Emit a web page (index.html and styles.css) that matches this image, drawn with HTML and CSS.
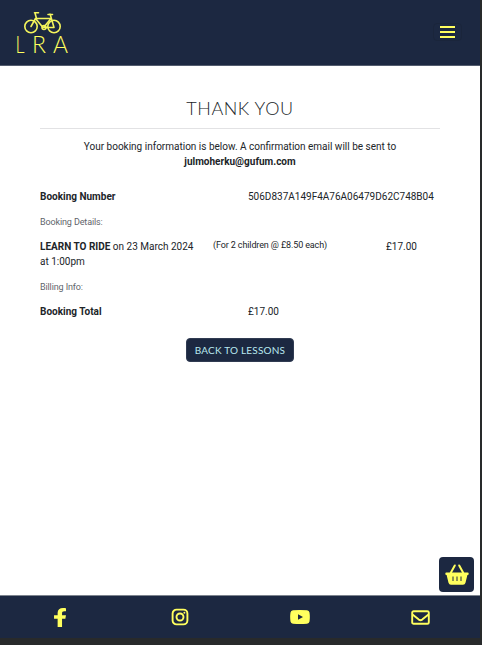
FILE: index.html
```html
<!DOCTYPE html>
<html lang="en">
<head>
<meta charset="utf-8">
<title>Thank You</title>
<link rel="stylesheet" href="styles.css">
</head>
<body>
<div class="page">
  <header class="header">
    <svg class="logo" width="60" height="50" viewBox="0 0 60 50" role="img" aria-label="LRA">
      <g fill="none" stroke="#f4f55c" stroke-width="1.600" stroke-linecap="round" stroke-linejoin="round">
        <circle cx="17" cy="18.500" r="6.200"/><circle cx="40" cy="18.500" r="6.200"/>
        <path d="M17 18.500l4.500-8L29 19.500h11L36.500 7.500M21.500 10.500L37 10.500M29.500 19.500l7.500-9M22.500 10.500L21 5M20.500 4.800h4M34 6.500h4.500M36.500 7.500l-.5-1.500"/>
        <circle cx="30" cy="19.500" r="2"/>
      </g>
      <g class="logo-text">
        <text x="1.500" y="44.500" textLength="9" lengthAdjust="spacingAndGlyphs">L</text>
        <text x="18" y="44.500" textLength="14" lengthAdjust="spacingAndGlyphs">R</text>
        <text x="39" y="44.500" textLength="15" lengthAdjust="spacingAndGlyphs">A</text>
      </g>
    </svg>
    <div class="menu"><span></span><span></span><span></span></div>
  </header>
  <main class="main">
    <h1 class="title">THANK YOU</h1>
    <p class="intro">Your booking information is below. A confirmation email will be sent to<br><b>julmoherku@gufum.com</b></p>
    <div class="row half"><b>Booking Number</b><span>506D837A149F4A76A06479D62C748B04</span></div>
    <div class="label">Booking Details:</div>
    <div class="row lesson">
      <span><b>LEARN TO RIDE</b> on 23 March 2024<br>at 1:00pm</span>
      <span class="small">(For 2 children @ £8.50 each)</span>
      <span>£17.00</span>
    </div>
    <div class="label">Billing Info:</div>
    <div class="row half"><b>Booking Total</b><span>£17.00</span></div>
    <a class="back">BACK TO LESSONS</a>
  </main>
  <footer class="footer">
    <div><svg width="12" height="19" viewBox="22 0 272 512" preserveAspectRatio="none"><path d="M279.140 288l14.220-92.660h-88.910v-60.130c0-25.350 12.420-50.060 52.240-50.060h40.420V6.260S260.430 0 225.360 0c-73.220 0-121.080 44.380-121.080 124.720v70.620H22.890V288h81.390v224h100.170V288z"/></svg></div>
    <div><svg width="18" height="18" viewBox="0 0 18 18"><rect class="line" x="1.600" y="1.600" width="14.800" height="14.800" rx="4"/><circle class="line" cx="9" cy="9" r="3.500"/><circle cx="13.400" cy="4.700" r="1"/></svg></div>
    <div><svg width="20" height="14" viewBox="0 0 20 14"><path fill-rule="evenodd" d="M3 .3Q10-.3 17 .3q2.200.3 2.500 2.300.7 4.400 0 8.800-.3 2-2.500 2.300Q10 14.300 3 13.700.8 13.400.5 11.400q-.7-4.400 0-8.800Q.8.600 3 .3zM8 4.200v5.600L13 7z"/></svg></div>
    <div><svg width="19" height="15" viewBox="0 0 19 15"><rect class="line" x="1.200" y="1.200" width="16.600" height="12.600" rx="1.400"/><path class="line" d="M1.500 4.500l6.300 5.100q1.700 1.200 3.400 0l6.300-5.100"/></svg></div>
  </footer>
  <a class="basket"><svg width="24" height="22" viewBox="0 0 24 22"><path d="M1.300 8.500h21.400q1 0 1 1.200t-1 1.200h-.3l-1.900 7.900q-.5 2-2.500 2H6q-2 0-2.500-2l-1.900-7.900h-.3q-1 0-1-1.200t1-1.200z"/><path class="handle" d="M5.800 8.800l4-7.300M18.200 8.800l-4-7.300"/><path class="slots" d="M8 12.500v4.500M12 12.500v4.500M16 12.500v4.500"/></svg></a>
</div>
</body>
</html>
```
FILE: styles.css
```css
* { box-sizing: border-box; }
body { margin: 0; background: #282a2b; overflow: hidden; }
.page {
  width: 480px; height: 638px; background: #fff; position: relative;
  display: flex; flex-direction: column;
  font: 10px/15px Roboto, sans-serif; color: #212529;
}
.header {
  height: 66px; flex: none; background: #1c2841; border-bottom: 1px solid #535c6e;
  display: flex; justify-content: space-between; padding: 8px 18px 0 14px;
}
.logo { display: block; }
.logo-text { font: 300 23px Lato, sans-serif; fill: #ffff5e; }
.menu {
  width: 29px; height: 18px; margin-top: 15px; border: 1px solid #1a253b; border-radius: 4px;
  display: flex; flex-direction: column; align-items: center; justify-content: center; gap: 3px;
}
.menu span { flex: none; width: 15px; height: 2px; background: #ffff5e; }
.main { flex: 1; padding: 30px 40px 0; display: flex; flex-direction: column; }
.title {
  margin: 0; height: 33px; font: 300 18px/24px Lato, sans-serif; letter-spacing: .55px;
  text-align: center; border-bottom: 1px solid #e2e2e4;
}
.intro { margin: 10px 0 20px; text-align: center; }
b { font-weight: 700; }
.row { display: grid; }
.half { grid-template-columns: 208px 1fr; }
.label { font-size: 9px; color: #5f656b; margin: 10px 0; letter-spacing: -.12px; position: relative; top: 1px; }
.lesson { grid-template-columns: 173px 173px 1fr; }
.small { font-size: 9px; line-height: 12px; letter-spacing: -.12px; }
.back {
  align-self: center; width: 108px; height: 24px; margin-top: 19px; border-radius: 4px;
  background: #1c2841; border: 1px solid #303b52; color: #b9e8f0;
  font: 10px/23px Lato, sans-serif; text-align: center; letter-spacing: .2px;
}
.footer {
  height: 43px; flex: none; background: #1c2841; border-top: 1px solid #7d848e;
  display: grid; grid-template-columns: repeat(4, 1fr);
}
.footer div { display: flex; align-items: center; justify-content: center; }
svg { fill: #ffff5e; }
.line { fill: none; stroke: #ffff5e; stroke-width: 1.900; }
.basket {
  position: absolute; right: 6px; bottom: 46px; width: 35px; height: 35px;
  border-radius: 4px; background: #1c2841; display: flex; align-items: center; justify-content: center;
}
.handle { fill: none; stroke: #ffff5e; stroke-width: 2; stroke-linecap: round; }
.slots { stroke: #1c2841; stroke-width: 1; }
```
